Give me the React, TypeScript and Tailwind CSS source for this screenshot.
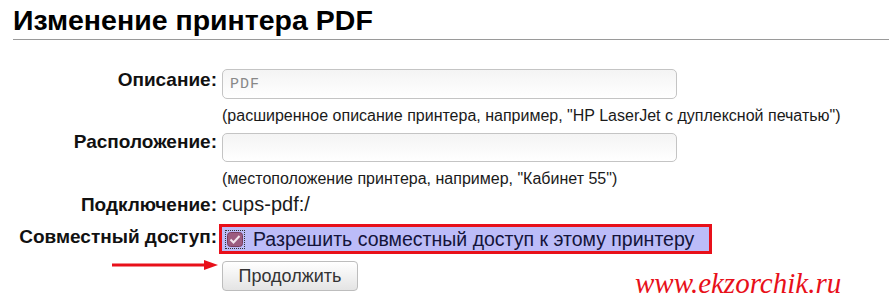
export default function App() {
  return (
    <div className="relative h-[303px] w-[889px] overflow-hidden bg-white font-['Liberation_Sans',Arial,sans-serif] text-[#111]">
      <h1 className="ml-[13px] border-b border-[#9a9a9a] pt-[4px] pb-[3px] text-[28.5px] font-bold leading-[32px] text-black">
        Изменение принтера PDF
      </h1>

      <div className="mt-[29px] flex flex-col">
        <div className="flex gap-[5px]">
          <div className="w-[217px] pt-[2px] text-right text-[19px] font-bold leading-[18px]">Описание:</div>
          <input
            readOnly
            value="PDF"
            className="h-[30px] w-[455px] rounded-[5px] border border-[#c4c4c4] bg-gradient-to-b from-[#f4f4f4] to-white px-[7px] font-['Liberation_Mono',monospace] text-[15px] tracking-[1px] text-[#888] outline-none"
          />
        </div>
        <div className="mt-[7px] pl-[222px] text-[16px] leading-[20px] text-[#1a1a1a]">
          (расширенное описание принтера, например, "HP LaserJet с дуплексной печатью")
        </div>

        <div className="mt-[7px] flex gap-[5px]">
          <div className="w-[217px] text-right text-[19px] font-bold leading-[18px]">Расположение:</div>
          <input
            readOnly
            value=""
            className="h-[29px] w-[455px] rounded-[5px] border border-[#c4c4c4] bg-gradient-to-b from-[#f4f4f4] to-white px-[7px] outline-none"
          />
        </div>
        <div className="mt-[7px] pl-[222px] text-[16px] leading-[20px] text-[#1a1a1a]">
          (местоположение принтера, например, "Кабинет 55")
        </div>

        <div className="mt-[6px] flex items-baseline gap-[5px] leading-[18px]">
          <div className="w-[217px] text-right text-[19px] font-bold">Подключение:</div>
          <div className="text-[20px] text-[#1a1a1a]">cups-pdf:/</div>
        </div>

        <div className="mt-[10px] flex gap-[5px]">
          <div className="w-[217px] pt-[4px] text-right text-[19px] font-bold leading-[18px]">Совместный доступ:</div>
          <div className="-ml-[3px] flex h-[30px] w-[493px] items-center border-[3px] border-[#e8101a] bg-[#bcbcf8]">
            <div className="ml-[3px] flex h-[19px] w-[20px] items-center justify-center border border-dotted border-[#333]">
              <svg width="16" height="15" viewBox="0 0 16 15">
                <rect x="0.5" y="0.5" width="15" height="14" rx="3" fill="#9c5c80" stroke="#7a3e60" />
                <path d="M3.5 7.5 L6.5 10.5 L12.5 4" fill="none" stroke="#f3e6ee" strokeWidth="2" />
              </svg>
            </div>
            <span className="ml-[8px] text-[19.5px] leading-[22px] text-[#14143a]">
              Разрешить совместный доступ к этому принтеру
            </span>
          </div>
        </div>

        <div className="mt-[7px] pl-[222px]">
          <button className="h-[30px] w-[136px] rounded-[4px] border border-[#bdbdbd] bg-gradient-to-b from-white to-[#e4e4e4] text-[18px] text-[#333]">
            Продолжить
          </button>
        </div>
      </div>

      <svg className="absolute left-[112px] top-[259px]" width="108" height="12" viewBox="0 0 108 12">
        <line x1="0" y1="6" x2="96" y2="6" stroke="#e8101a" strokeWidth="3" />
        <polygon points="92,1 106,6 92,11" fill="#e8101a" />
      </svg>

      <div className="absolute left-[635px] top-[267px] font-['Liberation_Serif',serif] text-[29px] italic leading-[32px] text-[#e8101a]">
        www.ekzorchik.ru
      </div>
    </div>
  );
}
